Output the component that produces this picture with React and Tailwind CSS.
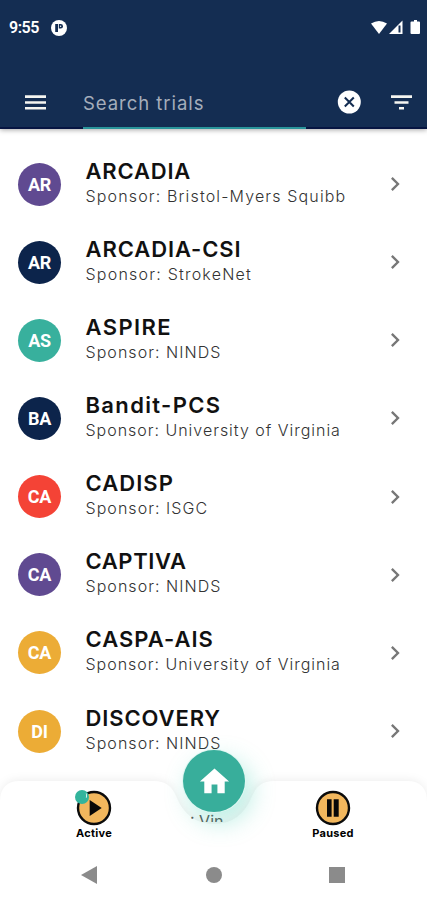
import { MdHome, MdChevronRight } from 'react-icons/md';

const trials = [
  { name: 'ARCADIA', sponsor: 'Bristol-Myers Squibb', initials: 'AR', color: 'bg-[#604a91]', track: 'tracking-[0.8px]', subTrack: 'tracking-[1.15px]' },
  { name: 'ARCADIA-CSI', sponsor: 'StrokeNet', initials: 'AR', color: 'bg-[#0c244b]', track: 'tracking-[0.9px]', subTrack: 'tracking-[1.22px]' },
  { name: 'ASPIRE', sponsor: 'NINDS', initials: 'AS', color: 'bg-[#38b09d]', track: 'tracking-[1.4px]', subTrack: 'tracking-[1.05px]' },
  { name: 'Bandit-PCS', sponsor: 'University of Virginia', initials: 'BA', color: 'bg-[#0c244b]', track: 'tracking-[1.35px]', subTrack: 'tracking-[0.98px]' },
  { name: 'CADISP', sponsor: 'ISGC', initials: 'CA', color: 'bg-[#f44336]', track: 'tracking-[1.05px]', subTrack: 'tracking-[1.05px]' },
  { name: 'CAPTIVA', sponsor: 'NINDS', initials: 'CA', color: 'bg-[#604a91]', track: 'tracking-[0.6px]', subTrack: 'tracking-[1.05px]' },
  { name: 'CASPA-AIS', sponsor: 'University of Virginia', initials: 'CA', color: 'bg-[#ecac36]', track: 'tracking-[1px]', subTrack: 'tracking-[0.98px]' },
  { name: 'DISCOVERY', sponsor: 'NINDS', initials: 'DI', color: 'bg-[#ecac36]', track: 'tracking-[0.9px]', subTrack: 'tracking-[1.05px]' },
];

function StatusBar() {
  return (
    <div className="flex h-[55px] items-center justify-between pl-[9px] pr-[7px] text-white">
      <div className="flex items-center gap-[12px]">
        <span className="w-[30px] whitespace-nowrap font-[Roboto,sans-serif] text-[16px] font-semibold tracking-[-0.5px]">9:55</span>
        <svg width="16" height="16" viewBox="0 0 16 16">
          <circle cx="8" cy="8" r="8" fill="#fff" />
          <path d="M4.200 4H7V12H4.200z" fill="#142d52" />
          <path d="M7.800 4h1.900a2.300 2.300 0 0 1 0 4.600H7.800z" fill="#142d52" />
          <circle cx="9.600" cy="6.200" r="0.7" fill="#fff" />
        </svg>
      </div>
      <svg width="49" height="16" viewBox="0 0 49 16" fill="#fff">
        <path d="M0 3.600Q8 -1.800 16 3.600L8 14z" />
        <path d="M31.500 .5V14H18z" />
        <path d="M27.500 5.500h2v7h-2z" fill="#142d52" />
        <path d="M41 1.500h2V0h3v1.500h2a1 1 0 0 1 1 1V13a1 1 0 0 1-1 1h-7.500a1 1 0 0 1-1-1V2.500a1 1 0 0 1 1-1z" />
      </svg>
    </div>
  );
}

function Header() {
  return (
    <header className="relative z-10 flex h-[129px] shrink-0 flex-col bg-[#142d52] shadow-[0_1px_5px_rgba(0,0,0,0.35)]">
      <StatusBar />
      <div className="flex flex-1 text-[#f5f5f1]">
        <div className="w-[83px] border-b-2 border-[#071542] pl-[25px] pt-[40px]">
          <svg width="21" height="15" viewBox="0 0 21 15" fill="currentColor">
            <path d="M0 .3h21v2.600H0zM0 6.200h21v2.600H0zM0 12h21v2.600H0z" />
          </svg>
        </div>
        <div className="w-[223px] border-b-2 border-[#2a959b] pt-[36px] text-[18.5px] leading-6 tracking-[0.95px] text-[#a5adbb]">
          Search trials
        </div>
        <div className="flex flex-1 border-b-2 border-[#071542]">
          <svg className="ml-[31px] mt-[35px]" width="24" height="24" viewBox="0 0 24 24">
            <circle cx="12.300" cy="12" r="11.500" fill="#fff" />
            <path d="M7.800 7.500l9 9M16.800 7.500l-9 9" stroke="#142d52" strokeWidth="2" />
          </svg>
          <svg className="ml-[30px] mt-[40px]" width="21" height="15" viewBox="0 0 21 15" fill="currentColor">
            <path d="M0 .3h21v2.600H0zM3.500 6.200h14v2.600h-14zM8 12h5v2.600H8z" />
          </svg>
        </div>
      </div>
    </header>
  );
}

function TrialRow({ trial }) {
  return (
    <li className="flex h-[78.15px] items-center pl-[18px] pr-[18px]">
      <div className={`flex size-[43px] shrink-0 items-center justify-center rounded-full font-[Roboto,sans-serif] text-[18px] font-bold tracking-[-0.3px] text-white ${trial.color}`}>
        {trial.initials}
      </div>
      <div className="ml-[24.500px] flex-1 whitespace-nowrap pb-px">
        <h2 className={`text-[22px] font-semibold leading-[25px] text-[#111] ${trial.track}`}>{trial.name}</h2>
        <p className={`text-[16px] font-light leading-[25px] text-[#333] ${trial.subTrack}`}>Sponsor: {trial.sponsor}</p>
      </div>
      <MdChevronRight size={28} className="shrink-0 text-[#777]" />
    </li>
  );
}

function TabButton({ label, active, children }) {
  return (
    <button className="flex w-[60px] flex-col items-center">
      <span className="relative">
        <svg width="36" height="36" viewBox="0 0 36 36">
          <circle cx="18" cy="18" r="16" fill="#f2b75d" stroke="#0b0b0b" strokeWidth="2.400" />
          {children}
        </svg>
        {active && (
          <span className="absolute -left-px top-0 size-[14px] rounded-full bg-[#32b49c]">
            <span className="absolute right-[2px] top-[3px] h-[5px] w-[3px] rounded-full border-r border-white/80" />
          </span>
        )}
      </span>
      <span className="text-[11px] font-bold leading-[14px] tracking-[0.3px] text-black">{label}</span>
    </button>
  );
}

function BottomBar() {
  return (
    <footer className="relative h-[120px] shrink-0">
      {/* bar silhouette with the notch for the home button */}
      <svg className="absolute -top-3 left-0" width="427" height="132" viewBox="0 0 427 132">
        <path
          d="M0 132V34Q0 13 20 13H154Q170 13 176 28Q187 56 214 56Q241 56 252 28Q258 13 274 13H407Q427 13 427 34V132z"
          fill="#fff"
          className="drop-shadow-[0_-1px_4px_rgba(0,0,0,0.07)]"
        />
      </svg>
      <span className="absolute left-[190px] top-[32px] h-[10px] w-[37px] overflow-hidden whitespace-nowrap text-[16px] leading-[18px] text-[#555]">: Vin</span>
      <button className="absolute left-[183px] top-[-30px] flex size-[62px] items-center justify-center rounded-full bg-[#38ae9b] text-white shadow-[0_0_0_1px_#dff7f2,6px_10px_24px_rgba(56,205,175,0.36)]">
        <MdHome size={35} />
      </button>
      <div className="relative flex justify-between px-[64px] pt-[10px]">
        <TabButton label="Active" active>
          <path d="M13.700 10L25.700 18L13.700 26z" fill="#080808" />
        </TabButton>
        <TabButton label="Paused">
          <path d="M12 9.300h4.600v17.400H12zM18.700 9.300h5v17.400h-5z" fill="#080808" />
        </TabButton>
      </div>
      <div className="relative mt-[26px] flex items-center justify-between pl-[81px] pr-[82px]">
        <svg width="17" height="18" viewBox="0 0 17 18"><path d="M0 9L16 0V18z" fill="#8b8b8b" /></svg>
        <span className="size-4 rounded-full bg-[#8b8b8b]" />
        <span className="size-4 bg-[#8b8b8b]" />
      </div>
    </footer>
  );
}

export default function App() {
  return (
    <div className="flex h-[900px] w-[427px] flex-col overflow-hidden bg-white font-[Inter,sans-serif]">
      <Header />
      <main className="h-[651px] shrink-0 overflow-hidden pt-[16px]">
        <ul>
          {trials.map((trial) => (
            <TrialRow key={trial.name} trial={trial} />
          ))}
        </ul>
      </main>
      <BottomBar />
    </div>
  );
}
